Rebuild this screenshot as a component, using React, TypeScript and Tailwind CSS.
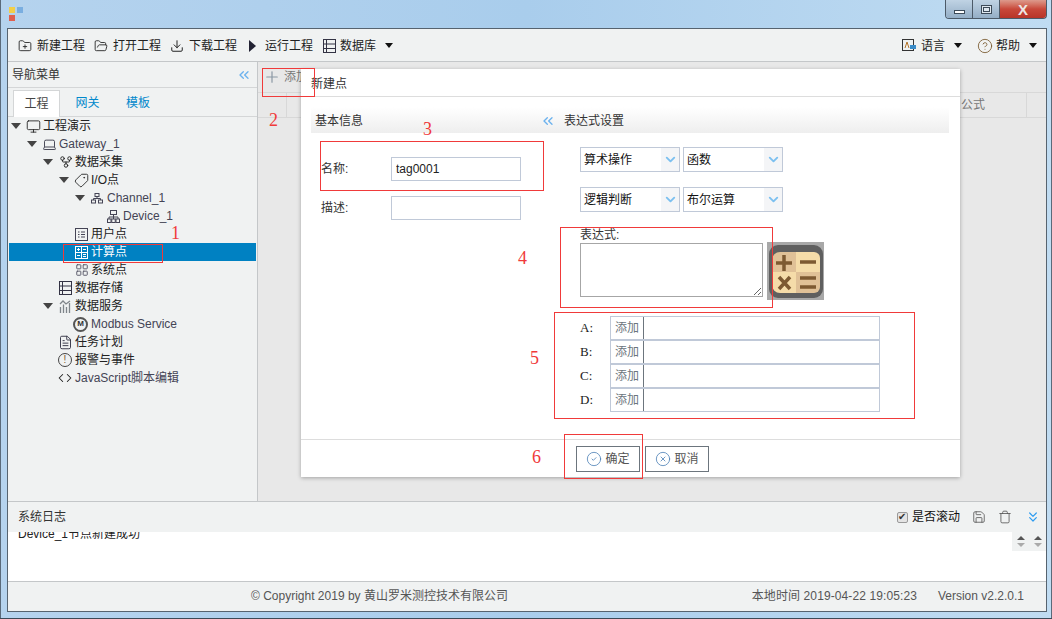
import type { ReactNode } from 'react';
import {
  ChevronDown,
  ChevronsDown,
  ChevronsLeft,
  CircleCheck,
  CircleHelp,
  CircleX,
  Code,
  Download,
  FileText,
  FolderOpen,
  FolderPlus,
  GitFork,
  Laptop,
  LayoutGrid,
  Monitor,
  Plus,
  Save,
  Tag,
  Trash,
} from 'lucide-react';

const caret = 'h-0 w-0 border-x-[4px] border-t-[5px] border-x-transparent border-t-[#111]';

function RowsIcon() {
  return (
    <svg width="13" height="14" viewBox="0 0 13 14" fill="none" stroke="#334">
      <rect x="0.5" y="0.5" width="12" height="13" />
      <path d="M3.500 1v12M1 5h11M1 9.500h11" />
    </svg>
  );
}

function CalcIcon() {
  return (
    <svg width="13" height="13" viewBox="0 0 13 13" fill="none" stroke="white">
      <rect x="0.5" y="0.5" width="12" height="12" />
      <path d="M0.500 6.500h12M6.500 0.500v12M2 3.500h3M3.500 2v3M8 3.500h3M2 9.500h3M8 8.500h3M8 10.500h3" />
    </svg>
  );
}

function ListIcon() {
  return (
    <svg width="13" height="13" viewBox="0 0 13 13" fill="none" stroke="#445">
      <rect x="0.5" y="0.5" width="12" height="12" />
      <path d="M3 4h1.500M6 4h4M3 6.500h1.500M6 6.500h4M3 9h1.500M6 9h4" />
    </svg>
  );
}

function ChartIcon() {
  return (
    <svg width="13" height="13" viewBox="0 0 13 13" fill="none" stroke="#7f858a" strokeWidth="1.3">
      <path d="M1.500 13V7M4.500 13V4.500M7.500 13V7M10.500 13V3M1 4l3-3 3 3 4-3" />
    </svg>
  );
}

function ChannelIcon() {
  return (
    <svg width="12" height="11" viewBox="0 0 12 11" fill="none" stroke="#445">
      <rect x="4" y="0.500" width="4" height="3" />
      <rect x="0.500" y="7" width="4" height="3" />
      <rect x="7.500" y="7" width="4" height="3" />
      <path d="M6 3.500v2M2.500 7V5.500h7V7" />
    </svg>
  );
}

function DeviceIcon() {
  return (
    <svg width="13" height="13" viewBox="0 0 13 13" fill="none" stroke="#445">
      <rect x="3.500" y="0.500" width="6" height="4" />
      <rect x="0.500" y="9" width="3.500" height="3.500" />
      <rect x="4.750" y="9" width="3.500" height="3.500" />
      <rect x="9" y="9" width="3.500" height="3.500" />
      <path d="M6.500 4.500V9M2 9V7h9v2" />
    </svg>
  );
}

function CalcBadge() {
  return (
    <svg width="57" height="58" viewBox="0 0 57 58" className="-mt-px ml-[4px] shrink-0">
      <rect width="57" height="58" fill="#a8a8a8" />
      <rect x="2" y="3" width="54" height="53" rx="9" fill="#5f5f5f" />
      <path d="M5 18a8 8 0 0 1 8-8h16v20H5z" fill="#e0c197" />
      <path d="M29 10h18a6 6 0 0 1 6 6v14H29z" fill="#f5dca9" />
      <path d="M5 30h24v21H13a8 8 0 0 1-8-8z" fill="#f5dca9" />
      <path d="M29 30h24v15a6 6 0 0 1-6 6H29z" fill="#e0c197" />
      <path d="M9 21h16M17 13v16M33 20h16M12 35l11 12M23 35L12 47M33 36h16M33 45h16" stroke="#7d5a32" strokeWidth="3.500" fill="none" />
    </svg>
  );
}

interface TreeRowProps {
  indent: string;
  open?: boolean;
  active?: boolean;
  icon: ReactNode;
  label: string;
  textClass?: string;
}

function TreeRow({ indent, open, active, icon, label, textClass = 'text-[#222]' }: TreeRowProps) {
  return (
    <div className={`flex h-[18px] items-center ${indent} ${active ? 'bg-[#0081c2]' : ''}`}>
      <span className="flex w-[16px] shrink-0 items-center">
        {open && <span className="h-0 w-0 border-x-[5px] border-t-[6px] border-x-transparent border-t-[#444]" />}
      </span>
      <span className="flex w-[16px] shrink-0 items-center">{icon}</span>
      <span className={`whitespace-nowrap ${active ? 'text-white' : textClass}`}>{label}</span>
    </div>
  );
}

function FakeSelect({ label }: { label: string }) {
  return (
    <div className="flex h-[25px] w-[100px] items-stretch border border-[#c0c9d8] bg-white">
      <span className="flex-1 pl-[3px] pt-px leading-[23px] text-[#111]">{label}</span>
      <span className="flex w-[18px] items-center justify-center bg-[#f4f5f7]">
        <ChevronDown size={15} strokeWidth={3} className="text-[#7cc0f0]" />
      </span>
    </div>
  );
}

function VarRow({ name }: { name: string }) {
  return (
    <div className="flex h-[24px] items-center">
      <span className="w-[30px] font-['Liberation_Serif','Noto_Sans_CJK_SC',serif] text-[13px] text-[#222]">{name}:</span>
      <div className="flex h-[24px] w-[270px] border border-[#c0c9d8] bg-white">
        <span className="w-[33px] border-r border-[#6c757d] pl-[4px] leading-[22px] text-[#6c757d]">添加</span>
      </div>
    </div>
  );
}

function ToolItem({ icon, label, className = '' }: { icon: ReactNode; label: string; className?: string }) {
  return (
    <div className={`flex items-center ${className}`}>
      {icon}
      <span className="text-[#222]">{label}</span>
    </div>
  );
}

export default function App() {
  return (
    <div className="relative flex h-[619px] w-[1052px] flex-col overflow-hidden bg-gradient-to-r from-[#b5d3ee] via-[#a9cdec] to-[#c0dcf2] pb-[7px] pl-[7px] pr-[5px] font-['Liberation_Sans','Noto_Sans_CJK_SC',sans-serif] text-[12px] shadow-[inset_0_-1px_0_#3c4a58,inset_1px_0_0_#5a6a7a,inset_-1px_0_0_#5a6a7a]">
      {/* title bar */}
      <div className="flex h-[28px] shrink-0 items-start justify-between">
        <div className="mt-[7px] grid w-[14px] grid-cols-2 gap-[2px]">
          <span className="ml-[2px] h-[6px] w-[6px] bg-[#f2cf4a]" />
          <span className="ml-[2px] h-[6px] w-[6px] bg-[#7aaee0]" />
          <span className="ml-[2px] h-[6px] w-[6px] bg-[#e0604f]" />
        </div>
        <div className="flex h-[19px] overflow-hidden rounded-b-[4px] border border-t-0 border-[#4c5a68]">
          <div className="flex w-[27px] items-center justify-center border-r border-[#4c5a68] bg-gradient-to-b from-[#c0d3e4] to-[#94aec6]">
            <span className="mt-[5px] h-[4px] w-[11px] border border-[#3c4a58] bg-white" />
          </div>
          <div className="flex w-[27px] items-center justify-center border-r border-[#4c5a68] bg-gradient-to-b from-[#c0d3e4] to-[#94aec6]">
            <span className="flex h-[9px] w-[11px] items-center justify-center border border-[#3c4a58] bg-[#dfe8f0]">
              <span className="h-[5px] w-[7px] border border-[#3c4a58]" />
            </span>
          </div>
          <div className="flex w-[46px] items-center justify-center bg-gradient-to-b from-[#dc9a8c] via-[#c8483a] to-[#b83428] text-[15px] leading-none font-bold text-[#eee6e4]">
            X
          </div>
        </div>
      </div>

      {/* window */}
      <div className="flex min-h-0 flex-1 flex-col border border-[#56636f] bg-[#f0f2f2]">
        <div className="flex h-[33px] shrink-0 items-center border-b border-[#c4c7c9] pl-[10px] pr-[9px] pt-px">
          <ToolItem icon={<FolderPlus size={14} strokeWidth={1.5} className="mr-[5px] text-[#222]" />} label="新建工程" />
          <ToolItem className="ml-[9px]" icon={<FolderOpen size={14} strokeWidth={1.5} className="mr-[5px] text-[#222]" />} label="打开工程" />
          <ToolItem className="ml-[9px]" icon={<Download size={14} strokeWidth={1.7} className="mr-[5px] text-[#222]" />} label="下载工程" />
          <ToolItem
            className="ml-[12px]"
            icon={<span className="mr-[9px] h-0 w-0 border-y-[6px] border-l-[7px] border-y-transparent border-l-[#223]" />}
            label="运行工程"
          />
          <ToolItem className="ml-[10px]" icon={<span className="mr-[4px] flex"><RowsIcon /></span>} label="数据库" />
          <span className={`ml-[9px] ${caret}`} />
          <div className="ml-auto flex items-center">
            <svg width="14" height="13" viewBox="0 0 14 13" fill="none" className="mr-[5px]">
              <rect x="0.5" y="0.5" width="11" height="11" stroke="#333" />
              <path d="M3 9l2-6 2 6" stroke="#b5752a" />
              <rect x="8" y="6" width="6" height="4" fill="#3a8cc8" />
            </svg>
            <span className="text-[#222]">语言</span>
            <span className={`ml-[9px] ${caret}`} />
            <CircleHelp size={16} strokeWidth={1.3} className="ml-[15px] mr-[3px] text-[#7a5a30]" />
            <span className="text-[#222]">帮助</span>
            <span className={`ml-[9px] ${caret}`} />
          </div>
        </div>

        <div className="flex min-h-0 flex-1">
          {/* sidebar */}
          <div className="flex w-[250px] shrink-0 flex-col border-r border-[#c4c7c9]">
            <div className="flex h-[26px] shrink-0 items-center justify-between border-b border-[#d4d6d7] pl-[4px] pr-[5px] text-[#333]">
              <span>导航菜单</span>
              <ChevronsLeft size={16} className="text-[#6cb2ee]" />
            </div>
            <div className="flex h-[29px] shrink-0 items-end border-b border-[#d4d6d7] pl-[5px]">
              <div className="-mb-px flex h-[27px] w-[47px] items-center justify-center border border-b-0 border-[#d4d6d7] bg-white text-[#444]">工程</div>
              <div className="flex h-[27px] w-[51px] items-center justify-center pl-[4px] pt-px text-[#0088cc]">网关</div>
              <div className="flex h-[27px] w-[51px] items-center justify-center pl-[3px] pt-px text-[#0088cc]">模板</div>
            </div>
            <div className="pl-px pr-px">
              <TreeRow indent="pl-[2px]" open icon={<Monitor size={15} strokeWidth={1.4} className="-ml-px text-[#222]" />} label="工程演示" />
              <TreeRow indent="pl-[18px]" open icon={<Laptop size={15} strokeWidth={1.4} className="-ml-px text-[#334]" />} label="Gateway_1" textClass="text-[#445]" />
              <TreeRow indent="pl-[34px]" open icon={<GitFork size={14} strokeWidth={1.6} className="text-[#222]" />} label="数据采集" />
              <TreeRow indent="pl-[50px]" open icon={<Tag size={15} strokeWidth={1.4} className="-ml-px -scale-x-100 text-[#222]" />} label="I/O点" />
              <TreeRow indent="pl-[66px]" open icon={<ChannelIcon />} label="Channel_1" textClass="text-[#445]" />
              <TreeRow indent="pl-[82px]" icon={<DeviceIcon />} label="Device_1" textClass="text-[#445]" />
              <TreeRow indent="pl-[50px]" icon={<ListIcon />} label="用户点" />
              <TreeRow indent="pl-[50px]" active icon={<CalcIcon />} label="计算点" />
              <TreeRow indent="pl-[50px]" icon={<LayoutGrid size={14} strokeWidth={1.6} className="text-[#556]" />} label="系统点" />
              <TreeRow indent="pl-[34px]" icon={<RowsIcon />} label="数据存储" />
              <TreeRow indent="pl-[34px]" open icon={<ChartIcon />} label="数据服务" />
              <TreeRow
                indent="pl-[50px]"
                icon={
                  <span className="-ml-[2px] flex h-[15px] w-[15px] shrink-0 items-center justify-center rounded-full border-2 border-[#555] text-[8px] leading-none font-bold text-[#333]">
                    M
                  </span>
                }
                label="Modbus Service"
                textClass="text-[#445]"
              />
              <TreeRow indent="pl-[34px]" icon={<FileText size={15} strokeWidth={1.5} className="-ml-px text-[#334]" />} label="任务计划" />
              <TreeRow
                indent="pl-[34px]"
                icon={
                  <span className="-ml-px flex h-[14px] w-[14px] items-center justify-center rounded-full border border-[#444] text-[10px] leading-none text-[#7a5a30]">
                    !
                  </span>
                }
                label="报警与事件"
              />
              <TreeRow indent="pl-[34px]" icon={<Code size={14} strokeWidth={1.8} className="-ml-px text-[#222]" />} label="JavaScript脚本编辑" textClass="text-[#445]" />
            </div>
          </div>

          {/* content behind the dialog */}
          <div className="min-w-0 flex-1 bg-[#e8e8e8]">
            <div className="flex h-[31px] items-center border-b border-[#d8d8d8] pl-[5px] text-[#777]">
              <Plus size={18} strokeWidth={1.6} className="mr-[3px] text-[#8a97a3]" />
              <span>添加</span>
            </div>
            <div className="flex h-[25px] border-b border-[#d8d8d8] text-[#777]">
              <span className="w-[29px] border-r border-[#d8d8d8]" />
              <span className="flex flex-1 items-center justify-end border-r border-[#d8d8d8] pr-[41px]">公式</span>
              <span className="w-[19px]" />
            </div>
          </div>
        </div>

        {/* log */}
        <div className="flex h-[31px] shrink-0 items-center border-t border-[#c4c7c9] pl-[10px] pr-[5px] text-[#333]">
          <span>系统日志</span>
          <div className="ml-auto flex items-center">
            <span className="flex h-[11px] w-[11px] items-center justify-center rounded-[2px] border border-[#9a9a9a] bg-[#e4e4e4] text-[10px] leading-none text-[#333]">✔</span>
            <span className="ml-[4px] text-[#111]">是否滚动</span>
            <Save size={14} strokeWidth={1.4} className="ml-[12px] text-[#555]" />
            <Trash size={14} strokeWidth={1.4} className="ml-[12px] text-[#555]" />
            <ChevronsDown size={16} strokeWidth={1.8} className="ml-[13px] text-[#2d9cf0]" />
          </div>
        </div>
        <div className="flex h-[50px] shrink-0 items-start justify-between overflow-hidden border-b border-[#c4c7c9] bg-white pl-[10px]">
          <div className="-mt-[5px] leading-[14px] text-[#222]">Device_1节点新建成功</div>
          <div className="flex h-[19px] w-[34px] items-center justify-around bg-[#f0f2f2]">
            {[0, 1].map((i) => (
              <span key={i} className="flex flex-col gap-[3px]">
                <span className="h-0 w-0 border-x-[4px] border-b-[4px] border-x-transparent border-b-[#555]" />
                <span className="h-0 w-0 border-x-[4px] border-t-[4px] border-x-transparent border-t-[#aaa]" />
              </span>
            ))}
          </div>
        </div>
        <div className="flex h-[29px] shrink-0 items-center pb-[2px] pl-[243px] pr-[22px] text-[#555]">
          <span>© Copyright 2019 by 黄山罗米测控技术有限公司</span>
          <span className="ml-auto tracking-[0.1px]">本地时间 2019-04-22 19:05:23</span>
          <span className="ml-[21px]">Version v2.2.0.1</span>
        </div>
      </div>

      {/* dialog */}
      <div className="absolute left-[301px] top-[69px] flex h-[408px] w-[659px] flex-col bg-white text-[#333] shadow-[0_1px_4px_rgba(0,0,0,0.3)]">
        <div className="flex h-[28px] shrink-0 items-center border-b border-[#dddddd] pl-[10px] pt-[2px]">新建点</div>
        <div className="min-h-0 flex-1 pl-[10px] pr-[11px] pt-[10px]">
          <div className="flex h-[26px] items-center bg-gradient-to-b from-white to-[#eeeeee] pl-[4px] pt-px">
            <span className="w-[225px]">基本信息</span>
            <ChevronsLeft size={16} className="text-[#6cb2ee]" />
            <span className="ml-[8px]">表达式设置</span>
          </div>
          <div className="flex">
            <div className="w-[269px] pl-[10px] pt-[24px]">
              <div className="flex h-[24px] items-center">
                <span className="w-[70px]">名称:</span>
                <input
                  defaultValue="tag0001"
                  className="h-[24px] w-[130px] border border-[#c0c9d8] pl-[4px] text-[#222] outline-none"
                />
              </div>
              <div className="mt-[15px] flex h-[24px] items-center">
                <span className="w-[70px]">描述:</span>
                <input className="h-[24px] w-[130px] border border-[#c0c9d8] outline-none" />
              </div>
            </div>
            <div className="pt-[14px]">
              <div className="flex gap-[3px]">
                <FakeSelect label="算术操作" />
                <FakeSelect label="函数" />
              </div>
              <div className="mt-[15px] flex gap-[3px]">
                <FakeSelect label="逻辑判断" />
                <FakeSelect label="布尔运算" />
              </div>
              <div className="mt-[15px] h-[16px] pt-px leading-[14px]">表达式:</div>
              <div className="flex items-start">
                <textarea className="h-[54px] w-[183px] border border-[#a6a6a6] outline-none" />
                <CalcBadge />
              </div>
              <div className="mt-[16px]">
                <VarRow name="A" />
                <VarRow name="B" />
                <VarRow name="C" />
                <VarRow name="D" />
              </div>
            </div>
          </div>
        </div>
        <div className="flex h-[38px] shrink-0 items-center gap-[5px] border-t border-[#dddddd] pl-[275px]">
          <button className="flex h-[26px] w-[64px] items-center justify-center gap-[3px] border border-[#6c757d] text-[#555]">
            <CircleCheck size={16} strokeWidth={1.2} className="text-[#4a7fb5]" />
            确定
          </button>
          <button className="flex h-[26px] w-[64px] items-center justify-center gap-[3px] border border-[#6c757d] text-[#555]">
            <CircleX size={16} strokeWidth={1.2} className="text-[#4a7fb5]" />
            取消
          </button>
        </div>
      </div>

      {/* red markup drawn over the screenshot */}
      <div className="absolute left-[63px] top-[244px] h-[19px] w-[100px] border border-[#f03a3a]" />
      <div className="absolute left-[262px] top-[68px] h-[29px] w-[53px] border border-[#f03a3a]" />
      <div className="absolute left-[320px] top-[141px] h-[50px] w-[224px] border border-[#f03a3a]" />
      <div className="absolute left-[560px] top-[227px] h-[81px] w-[213px] border border-[#f03a3a]" />
      <div className="absolute left-[554px] top-[312px] h-[107px] w-[361px] border border-[#f03a3a]" />
      <div className="absolute left-[564px] top-[434px] h-[45px] w-[79px] border border-[#f03a3a]" />
      <span className="absolute left-[171px] top-[220px] font-['Liberation_Serif',serif] text-[18px] text-[#f03a3a]">1</span>
      <span className="absolute left-[269px] top-[107px] font-['Liberation_Serif',serif] text-[18px] text-[#f03a3a]">2</span>
      <span className="absolute left-[423px] top-[116px] font-['Liberation_Serif',serif] text-[18px] text-[#f03a3a]">3</span>
      <span className="absolute left-[518px] top-[245px] font-['Liberation_Serif',serif] text-[18px] text-[#f03a3a]">4</span>
      <span className="absolute left-[530px] top-[345px] font-['Liberation_Serif',serif] text-[18px] text-[#f03a3a]">5</span>
      <span className="absolute left-[532px] top-[444px] font-['Liberation_Serif',serif] text-[18px] text-[#f03a3a]">6</span>
    </div>
  );
}
